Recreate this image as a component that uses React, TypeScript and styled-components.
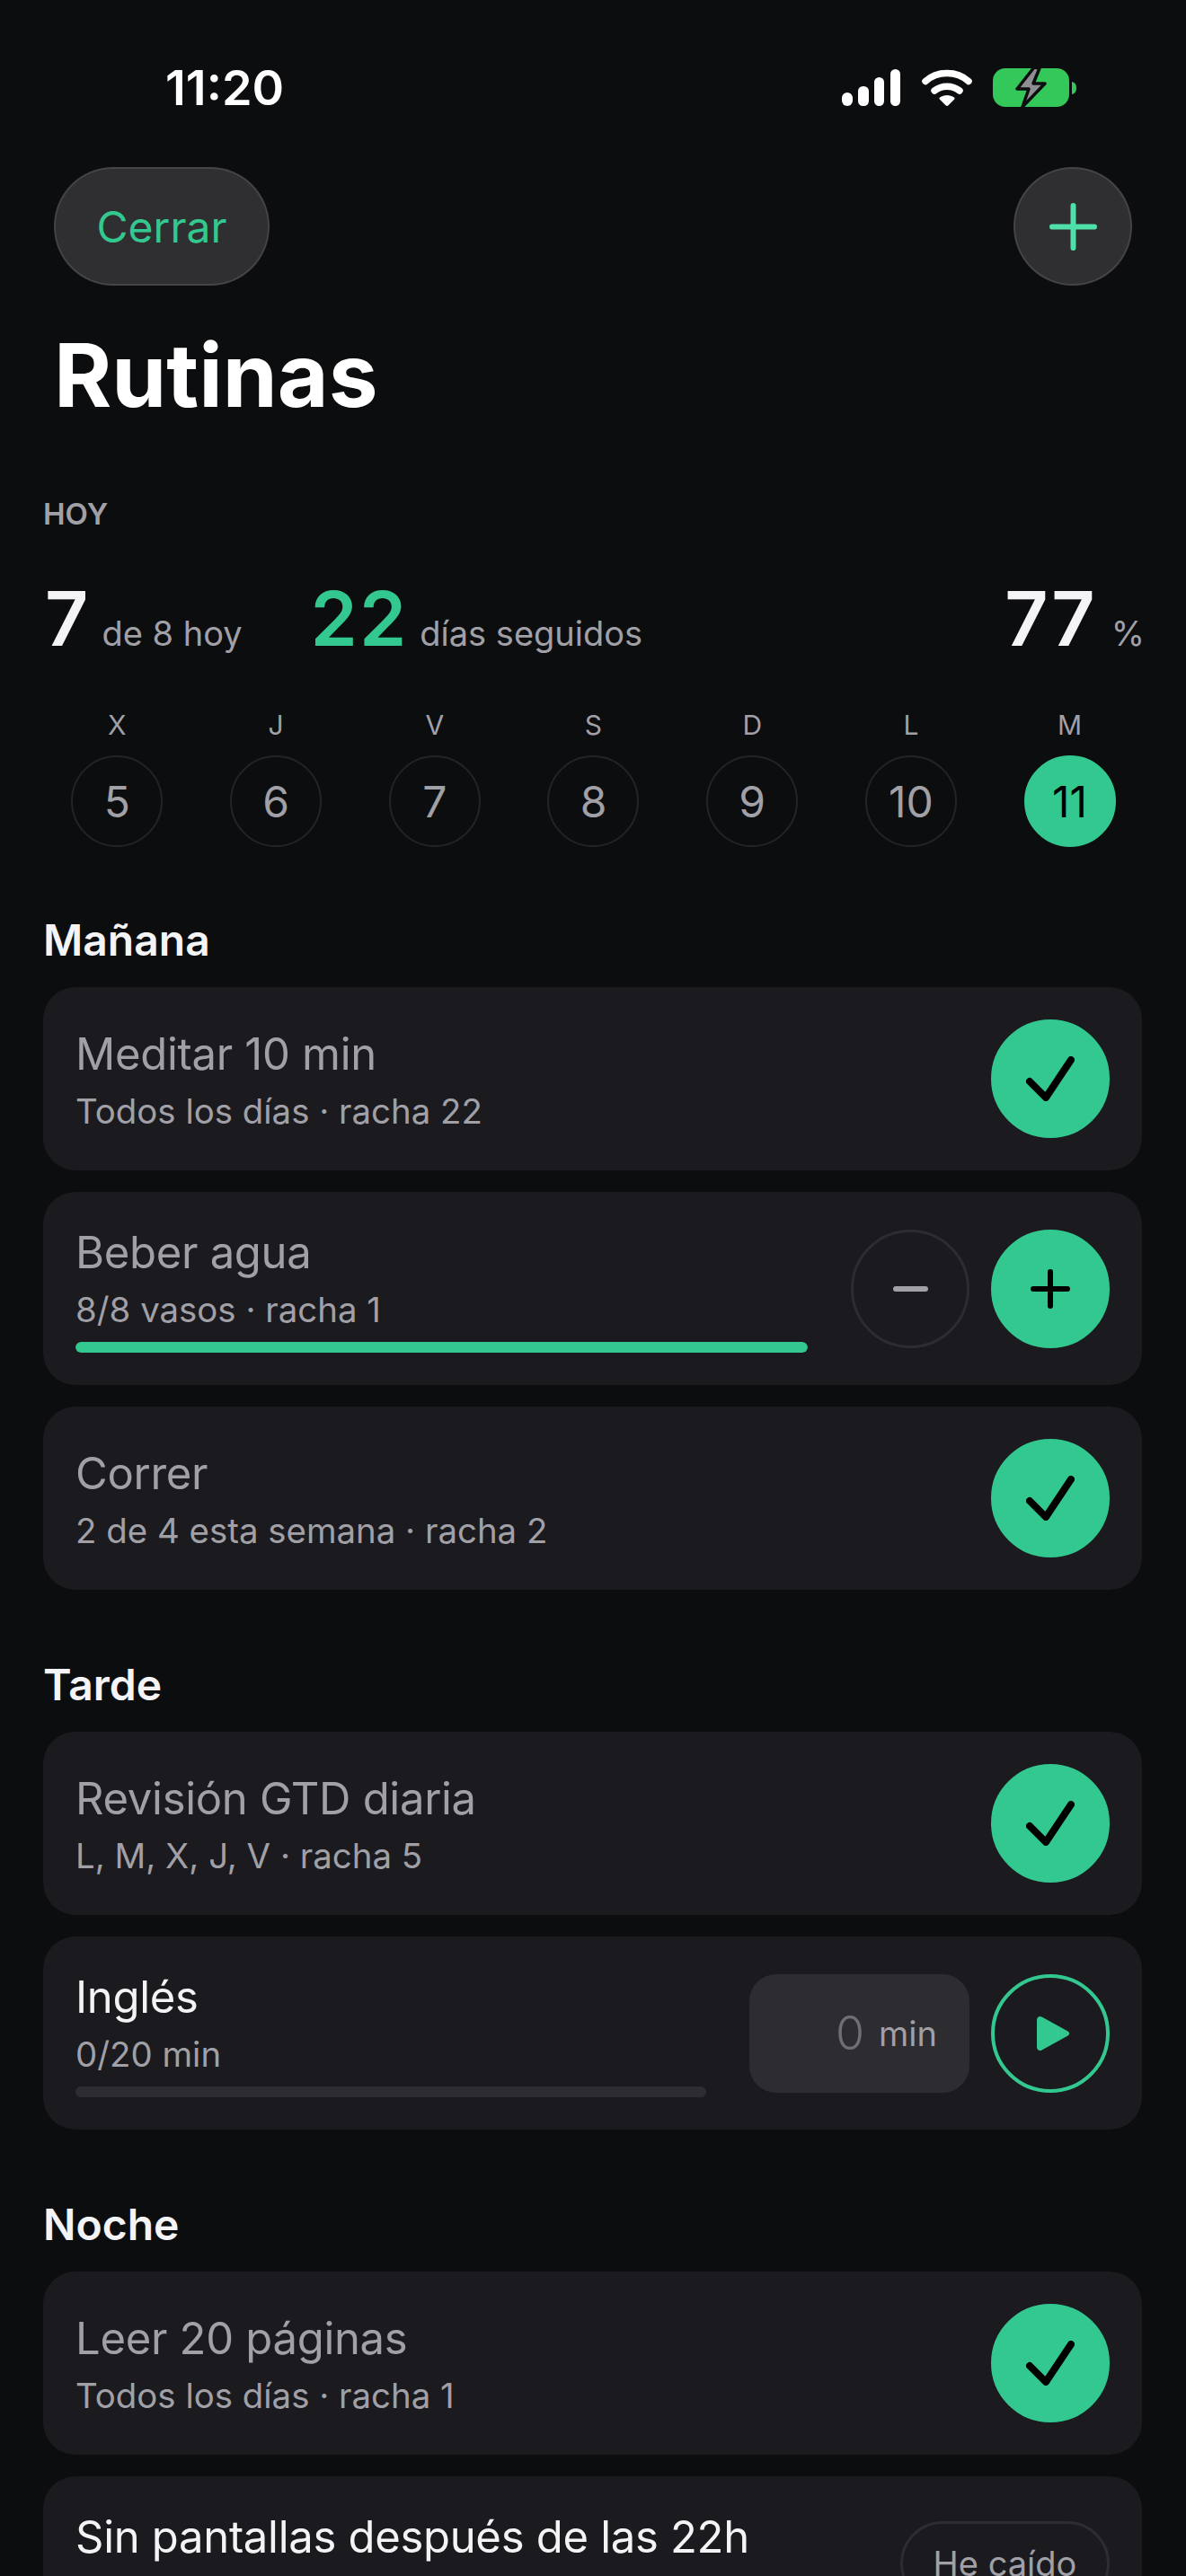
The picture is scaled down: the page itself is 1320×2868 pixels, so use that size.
import styled, { createGlobalStyle } from 'styled-components'

const GREEN = '#33c88f'
const MUTED = '#a0a0a6'

const GlobalStyle = createGlobalStyle`
  html, body {
    margin: 0;
    padding: 0;
    background: #0c0d0f;
  }
  body {
    font-family: Inter, "Liberation Sans", sans-serif;
    -webkit-font-smoothing: antialiased;
  }
`

type Routine = {
  title: string
  sub: string
  done?: boolean
  kind: 'check' | 'stepper' | 'timer' | 'lapse'
  progress?: number
}

const sections: { name: string; items: Routine[] }[] = [
  {
    name: 'Mañana',
    items: [
      { title: 'Meditar 10 min', sub: 'Todos los días · racha 22', done: true, kind: 'check' },
      { title: 'Beber agua', sub: '8/8 vasos · racha 1', done: true, kind: 'stepper', progress: 100 },
      { title: 'Correr', sub: '2 de 4 esta semana · racha 2', done: true, kind: 'check' },
    ],
  },
  {
    name: 'Tarde',
    items: [
      { title: 'Revisión GTD diaria', sub: 'L, M, X, J, V · racha 5', done: true, kind: 'check' },
      { title: 'Inglés', sub: '0/20 min', kind: 'timer', progress: 0 },
    ],
  },
  {
    name: 'Noche',
    items: [
      { title: 'Leer 20 páginas', sub: 'Todos los días · racha 1', done: true, kind: 'check' },
      { title: 'Sin pantallas después de las 22h', sub: '', kind: 'lapse' },
    ],
  },
]

const days = [
  ['X', '5'],
  ['J', '6'],
  ['V', '7'],
  ['S', '8'],
  ['D', '9'],
  ['L', '10'],
  ['M', '11'],
]

const SignalIcon = () => (
  <svg width="66" height="41" viewBox="0 0 66 41" fill="#fff">
    <rect x="0" y="26" width="12" height="15" rx="6" />
    <rect x="18" y="19" width="12" height="22" rx="5.5" />
    <rect x="36" y="9" width="11" height="32" rx="5.5" />
    <rect x="54" y="0" width="11" height="41" rx="5.5" />
  </svg>
)

const WifiIcon = () => (
  <svg width="56" height="41" viewBox="0 0 56 41" fill="none">
    <path d="M4 13.5 C17 1.5 39 1.5 52 13.5" stroke="#fff" strokeWidth="7.5" strokeLinecap="round" />
    <path d="M14 24 C22 17.5 34 17.5 42 24" stroke="#fff" strokeWidth="7.5" strokeLinecap="round" />
    <path
      d="M20 31.5 C24.5 28 31.5 28 36 31.5 C36.8 32.2 36.8 33 36 33.8 L29.5 40.3 C28.6 41.1 27.4 41.1 26.5 40.3 L20 33.8 C19.2 33 19.2 32.2 20 31.5Z"
      fill="#fff"
    />
  </svg>
)

const BatteryIcon = () => (
  <svg width="94" height="46" viewBox="0 0 94 46">
    <rect x="0" y="2" width="85" height="43" rx="14" fill="#34c759" />
    <path d="M88 17 C92 18 93 21 93 24 C93 27 92 30 88 31Z" fill="#34c759" />
    <path
      d="M46 1 L27 25 H40 L33 45 L58 19 H45 L52 2Z"
      fill="#8e8e93"
      stroke="#0c0d0f"
      strokeWidth="3.5"
      strokeLinejoin="round"
    />
  </svg>
)

const PlusIcon = ({ size, color, width }: { size: number; color: string; width: number }) => (
  <svg width={size} height={size} viewBox={`0 0 ${size} ${size}`} fill="none" stroke={color} strokeWidth={width} strokeLinecap="round">
    <path d={`M${size / 2} ${width / 2}V${size - width / 2}M${width / 2} ${size / 2}H${size - width / 2}`} />
  </svg>
)

const CheckIcon = () => (
  <svg width="54" height="50" viewBox="0 0 54 50" fill="none" stroke="#000" strokeWidth="8" strokeLinecap="round" strokeLinejoin="round">
    <path d="M4 28L22 46L50 4" />
  </svg>
)

const PlayIcon = () => (
  <svg width="38" height="40" viewBox="0 0 38 40" fill={GREEN}>
    <path d="M1 5C1 1.5 4 0 6.5 1.4L35.5 17.5C37.8 18.8 37.8 21.2 35.5 22.5L6.5 38.6C4 40 1 38.5 1 35Z" />
  </svg>
)

const RoutineCard = ({ item }: { item: Routine }) => (
  <Card $top={item.kind === 'lapse'}>
    <CardText>
      <CardTitle $done={item.done}>{item.title}</CardTitle>
      {item.sub && <CardSub>{item.sub}</CardSub>}
      {item.progress !== undefined && (
        <Track>
          <Fill style={{ width: `${item.progress}%` }} />
        </Track>
      )}
    </CardText>
    {item.kind === 'check' && (
      <RoundButton $filled>
        <CheckIcon />
      </RoundButton>
    )}
    {item.kind === 'stepper' && (
      <Controls>
        <RoundButton>
          <MinusMark />
        </RoundButton>
        <RoundButton $filled>
          <PlusIcon size={44} color="#000" width={6} />
        </RoundButton>
      </Controls>
    )}
    {item.kind === 'timer' && (
      <Controls>
        <MinutesBox>
          <MinutesValue>0</MinutesValue>
          <MinutesUnit>min</MinutesUnit>
        </MinutesBox>
        <PlayButton>
          <PlayIcon />
        </PlayButton>
      </Controls>
    )}
    {item.kind === 'lapse' && <LapseButton>He caído</LapseButton>}
  </Card>
)

export default function App() {
  return (
    <Screen>
      <GlobalStyle />
      <StatusBar>
        <Clock>11:20</Clock>
        <StatusIcons>
          <SignalIcon />
          <WifiIcon />
          <BatteryIcon />
        </StatusIcons>
      </StatusBar>

      <NavBar>
        <GlassPill>Cerrar</GlassPill>
        <GlassCircle>
          <PlusIcon size={53} color="#4fe0a9" width={6} />
        </GlassCircle>
      </NavBar>
      <PageTitle>Rutinas</PageTitle>

      <Content>
        <Eyebrow>HOY</Eyebrow>
        <Stats>
          <StatGroup>
            <StatNumber>7</StatNumber>
            <StatLabel>de 8 hoy</StatLabel>
          </StatGroup>
          <StatGroup>
            <StatNumber $green>22</StatNumber>
            <StatLabel>días seguidos</StatLabel>
          </StatGroup>
          <Percent>
            <StatNumber>77</StatNumber>
            <StatLabel>%</StatLabel>
          </Percent>
        </Stats>

        <Week>
          {days.map(([letter, num]) => (
            <Day key={letter}>
              <DayLetter>{letter}</DayLetter>
              <DayCircle $today={num === '11'}>{num}</DayCircle>
            </Day>
          ))}
        </Week>

        {sections.map((section) => (
          <Section key={section.name}>
            <SectionName>{section.name}</SectionName>
            <CardList>
              {section.items.map((item) => (
                <RoutineCard key={item.title} item={item} />
              ))}
            </CardList>
          </Section>
        ))}
      </Content>
    </Screen>
  )
}

const Screen = styled.div`
  width: 1320px;
  height: 2868px;
  overflow: hidden;
  background: #0c0d0f;
  color: #fff;
`

const StatusBar = styled.div`
  display: flex;
  justify-content: space-between;
  align-items: center;
  height: 46px;
  padding: 74px 121px 66px 184px;
`

const Clock = styled.div`
  font-size: 54px;
  font-weight: 600;
`

const StatusIcons = styled.div`
  display: flex;
  align-items: center;
  gap: 23px;
`

const NavBar = styled.div`
  display: flex;
  justify-content: space-between;
  padding: 0 60px;
`

const GlassPill = styled.button`
  width: 240px;
  height: 132px;
  border-radius: 66px;
  border: 2px solid rgba(255, 255, 255, 0.1);
  background: #2f2f31;
  color: ${GREEN};
  font-family: Inter, sans-serif;
  font-size: 48px;
`

const GlassCircle = styled.button`
  display: flex;
  align-items: center;
  justify-content: center;
  width: 132px;
  height: 132px;
  padding: 0;
  border-radius: 50%;
  border: 2px solid rgba(255, 255, 255, 0.1);
  background: #2f2f31;
`

const PageTitle = styled.h1`
  margin: 42px 0 0 60px;
  font-size: 98px;
  line-height: 116px;
  font-weight: 700;
`

const Content = styled.div`
  padding: 0 49px 0 48px;
`

const Eyebrow = styled.div`
  margin-top: 76px;
  font-size: 33px;
  line-height: 40px;
  font-weight: 600;
  color: ${MUTED};
`

const Stats = styled.div`
  display: flex;
  align-items: baseline;
  gap: 76px;
  margin-top: 47px;
  padding-left: 2px;
`

const StatGroup = styled.div`
  display: flex;
  align-items: baseline;
  gap: 13px;
`

const Percent = styled(StatGroup)`
  margin: 0 -3px 0 auto;
  gap: 16px;
`

const StatNumber = styled.span<{ $green?: boolean }>`
  font-size: 84px;
  line-height: 100px;
  font-weight: 600;
  letter-spacing: 2px;
  color: ${(p) => (p.$green ? GREEN : '#f4f4f6')};
`

const StatLabel = styled.span`
  font-size: 38px;
  color: ${MUTED};
`

const Week = styled.div`
  display: grid;
  grid-template-columns: repeat(7, 1fr);
  margin: 50px -8px 0 -6px;
`

const Day = styled.div`
  display: flex;
  flex-direction: column;
  align-items: center;
  gap: 16px;
`

const DayLetter = styled.div`
  font-size: 30px;
  line-height: 36px;
  color: ${MUTED};
`

const DayCircle = styled.div<{ $today?: boolean }>`
  display: flex;
  align-items: center;
  justify-content: center;
  box-sizing: border-box;
  width: 102px;
  height: 102px;
  border-radius: 50%;
  border: 2px solid ${(p) => (p.$today ? GREEN : '#242427')};
  background: ${(p) => (p.$today ? GREEN : 'transparent')};
  color: ${(p) => (p.$today ? '#000' : MUTED)};
  font-size: 48px;
`

const Section = styled.section`
  margin-top: 78px;
  &:first-of-type {
    margin-top: 76px;
  }
`

const SectionName = styled.h2`
  margin: 0 0 24px;
  font-size: 48px;
  line-height: 56px;
  font-weight: 600;
  color: #f4f4f6;
`

const CardList = styled.div`
  display: flex;
  flex-direction: column;
  gap: 24px;
`

const Card = styled.div<{ $top?: boolean }>`
  display: flex;
  align-items: ${(p) => (p.$top ? 'flex-start' : 'center')};
  gap: 48px;
  padding: 36px;
  min-height: 132px;
  background: #1a1a1f;
  border-radius: 36px;
`

const CardText = styled.div`
  flex: 1;
  min-width: 0;
`

const CardTitle = styled.div<{ $done?: boolean }>`
  font-size: 49px;
  line-height: 64px;
  letter-spacing: -0.3px;
  color: ${(p) => (p.$done ? MUTED : '#f4f4f6')};
`

const CardSub = styled.div`
  margin-top: 8px;
  font-size: 38.4px;
  line-height: 46px;
  color: ${MUTED};
`

const Track = styled.div`
  height: 12px;
  margin-top: 13px;
  border-radius: 6px;
  background: #2c2c31;
  overflow: hidden;
`

const Fill = styled.div`
  height: 100%;
  border-radius: 6px;
  background: ${GREEN};
`

const Controls = styled.div`
  display: flex;
  align-items: center;
  gap: 24px;
`

const RoundButton = styled.div<{ $filled?: boolean }>`
  display: flex;
  align-items: center;
  justify-content: center;
  box-sizing: border-box;
  flex: none;
  width: 132px;
  height: 132px;
  border-radius: 50%;
  background: ${(p) => (p.$filled ? GREEN : 'transparent')};
  border: 3px solid ${(p) => (p.$filled ? GREEN : '#2c2c31')};
`

const MinusMark = styled.div`
  width: 39px;
  height: 6px;
  border-radius: 3px;
  background: ${MUTED};
`

const PlayButton = styled(RoundButton)`
  border: 4px solid ${GREEN};
  padding-left: 6px;
`

const MinutesBox = styled.div`
  display: flex;
  align-items: center;
  justify-content: flex-end;
  gap: 16px;
  box-sizing: border-box;
  width: 245px;
  height: 132px;
  padding: 0 36px;
  border-radius: 30px;
  background: #2c2c31;
`

const MinutesValue = styled.span`
  font-size: 52px;
  font-weight: 300;
  color: #6e6e73;
`

const MinutesUnit = styled.span`
  font-size: 38px;
  color: ${MUTED};
`

const LapseButton = styled.div`
  flex: none;
  box-sizing: border-box;
  width: 233px;
  height: 94px;
  margin-top: 14px;
  font-size: 38px;
  line-height: 88px;
  text-align: center;
  color: ${MUTED};
  border: 3px solid #2c2c31;
  border-radius: 47px;
`
